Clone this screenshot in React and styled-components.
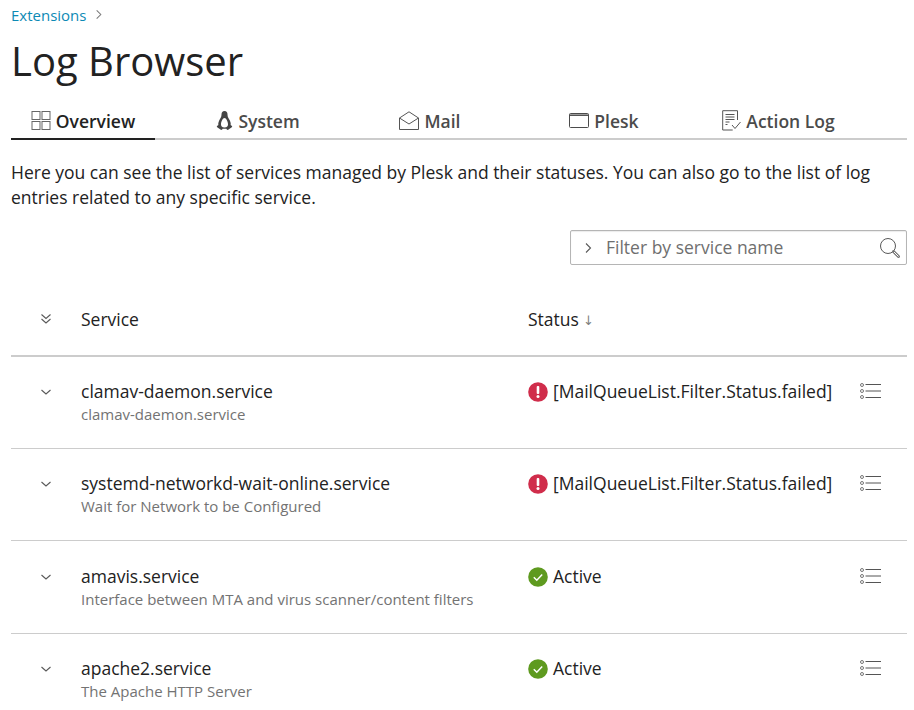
import React from "react";
import styled, { createGlobalStyle } from "styled-components";

const Global = createGlobalStyle`
  html, body { margin: 0; padding: 0; background: #fff; height: 100%; overflow: hidden; }
  body { font-family: "Open Sans", "Liberation Sans", sans-serif; color: #222; font-size: 16px; }
`;
const Page = styled.div`
  padding: 0 7px 0 11px;
  width: 914px;
  box-sizing: border-box;
`;
const Crumbs = styled.nav`
  display: flex;
  align-items: center;
  gap: 7px;
  height: 32px;
  font-size: 15px;
  color: #0d8ab5;
  padding-bottom: 3px;
  box-sizing: border-box;
`;
const Title = styled.h1`
  margin: 0;
  font-size: 40px;
  font-weight: 400;
  line-height: 58px;
  color: #222;
`;
const Tabs = styled.div`
  display: flex;
  height: 50px;
  border-bottom: 2px solid #ccc;
  box-sizing: border-box;
`;
const Tab = styled.div`
  width: ${(p) => p.$w}px;
  display: flex;
  align-items: center;
  justify-content: center;
  gap: 5px;
  font-size: 17.5px;
  font-weight: 600;
  color: ${(p) => (p.$active ? "#222" : "#4b4b4b")};
  height: 50px;
  padding-top: 13px;
  box-sizing: border-box;
  border-bottom: 2px solid ${(p) => (p.$active ? "#222" : "transparent")};
`;
const Intro = styled.p`
  margin: 20px 0 0;
  font-size: 17.5px;
  line-height: 25px;
  color: #222;
`;
const FilterRow = styled.div`
  display: flex;
  justify-content: flex-end;
  margin-top: 20px;
`;
const Filter = styled.div`
  width: 337px;
  height: 35px;
  box-sizing: border-box;
  border: 1px solid #b5b5b5;
  border-radius: 2px;
  display: flex;
  align-items: center;
  padding: 0 5px 0 11px;
  box-shadow: inset 0 1px 1px rgba(0, 0, 0, 0.08);
`;
const Placeholder = styled.span`
  flex: 1;
  margin-left: 12px;
  font-size: 17.5px;
  line-height: 30px;
  padding-bottom: 2px;
  color: #6f6f6f;
`;
const Grid = styled.div`
  display: grid;
  grid-template-columns: 70px 447px 1fr 59px;
  margin-top: 31px;
`;
const HeaderCell = styled.div`
  height: 61px;
  border-bottom: 2px solid #ccc;
  box-sizing: border-box;
  display: flex;
  align-items: flex-start;
  justify-content: ${(p) => (p.$center ? "center" : "flex-start")};
  padding-top: ${(p) => (p.$center ? 16 : 11)}px;
  font-size: 17.5px;
  line-height: 24px;
  color: #222;
  gap: 4px;
`;
const Cell = styled.div`
  height: 92.2px;
  border-bottom: 1px solid #ccc;
  box-sizing: border-box;
  padding-top: ${(p) => p.$top ?? 22.2}px;
  display: flex;
  align-items: flex-start;
  justify-content: ${(p) => (p.$center ? "center" : p.$end ? "flex-end" : "flex-start")};
  padding-right: ${(p) => (p.$end ? 26 : 0)}px;
`;
const ServiceName = styled.div`
  font-size: 17.5px;
  line-height: 24px;
  color: #222;
`;
const ServiceDesc = styled.div`
  font-size: 15px;
  line-height: 22px;
  color: #737373;
`;
const StatusWrap = styled.div`
  display: flex;
  align-items: center;
  gap: 5px;
  font-size: 17.5px;
  line-height: 24px;
  color: #222;
`;
const StatusBadge = styled.span`
  display: block;
  margin: 2px 0.5px 0 -0.5px;
  flex: none;
`;
const Arrow = styled.span`
  font-size: 13px;
  color: #808080;
  font-family: "DejaVu Sans", sans-serif;
  padding-top: 2px;
`;

const Chevron = ({ dir = "down", w = 12, c = "#595959" }) => (
  <svg width={w} height={w} viewBox="0 0 12 12" fill="none" stroke={c} strokeWidth="1.1" style={{ display: "block", flex: "none" }}>
    {dir === "down" ? <path d="M1.5 4l4.5 4 4.5-4" /> : <path d="M4 1.5l4.5 4.5L4 10.5" />}
  </svg>
);
const Double = () => (
  <svg width="12" height="14" viewBox="0 0 12 14" fill="none" stroke="#595959" strokeWidth="1.1" style={{ display: "block" }}>
    <path d="M1.5 2.5l4.5 4 4.5-4M1.5 7l4.5 4 4.5-4" />
  </svg>
);
const GridIcon = () => (
  <svg width="20" height="20" viewBox="0 0 20 20" fill="none" stroke="#666" style={{ display: "block", flex: "none" }}>
    <rect x="1" y="0.5" width="8" height="8" />
    <rect x="11" y="0.5" width="8" height="8" />
    <rect x="1" y="10.5" width="8" height="8" />
    <rect x="11" y="10.5" width="8" height="8" />
  </svg>
);
const Tux = () => (
  <svg width="17" height="21" viewBox="0 0 17 20" style={{ display: "block", flex: "none" }}>
    <path fill="#444" fillRule="evenodd" d="M8.5 0.5c2 0 3 1.5 3 3.5 0 2.5 1 3.5 2.2 5.8 1 2 1.3 3.6.9 4.6.9.5 1.6 1 1.6 1.8 0 .8-2.6 1.6-3.6 2.8-.8.8-2 .3-2.2-.8H6.6c-.2 1.1-1.4 1.6-2.2.8-1-1.2-3.6-2-3.6-2.8 0-.8.7-1.3 1.6-1.8-.4-1 0-2.6.9-4.6C4.500 7.500 5.500 6.500 5.500 4c0-2 1-3.500 3-3.500zM8.500 7.500C6.800 7.500 5 11 5 14c0 1.500.8 3 3.500 3s3.500-1.500 3.500-3c0-3-1.800-6.500-3.500-6.500z" />
  </svg>
);
const MailIcon = () => (
  <svg width="20" height="20" viewBox="0 0 20 20" fill="none" stroke="#555" style={{ display: "block", flex: "none" }}>
    <path d="M0.500 7L10 0.800 19.500 7v11.500H0.500zM0.500 7l9.500 6 9.500-6" />
  </svg>
);
const WindowIcon = () => (
  <svg width="20" height="16" viewBox="0 0 20 16" fill="none" stroke="#4b4b4b" style={{ display: "block", flex: "none" }}>
    <rect x="0.500" y="0.500" width="19" height="14" rx="1" />
    <path d="M0.500 2.200h19" strokeWidth="1.500" />
  </svg>
);
const LogIcon = () => (
  <svg width="19" height="21" viewBox="0 0 19 21" fill="none" stroke="#555" style={{ display: "block", flex: "none" }}>
    <path d="M15.500 10V0.700H0.700v19.300h10" />
    <path d="M3.500 4.500h9M3.500 7h9M3.500 9.500h9M3.500 12h4M3.500 14.500h2" />
    <path d="M10 15l3 3.500 5.500-6.500" />
  </svg>
);
const SearchIcon = () => (
  <svg width="22" height="22" viewBox="0 0 22 22" fill="none" style={{ display: "block", flex: "none" }}>
    <circle cx="9" cy="9" r="7.500" stroke="#595959" />
    <path d="M14.500 14.500l5 5" stroke="#777" strokeWidth="3" strokeLinecap="round" />
    <path d="M15 15l4.500 4.500" stroke="#fff" strokeWidth="1" />
  </svg>
);
const ListIcon = () => (
  <svg width="21" height="16" viewBox="0 0 21 16" fill="none" style={{ display: "block" }}>
    <circle cx="2" cy="2" r="1.500" stroke="#777" />
    <circle cx="2" cy="8" r="1.500" stroke="#777" />
    <circle cx="2" cy="14" r="1.500" stroke="#777" />
    <path d="M5.500 1.500h15.500M5.500 8h15.500M5.500 14.500h15.500" stroke="#555" />
  </svg>
);
const FailIcon = () => (
  <svg width="20" height="20" viewBox="0 0 20 20" style={{ display: "block" }}>
    <circle cx="10" cy="10" r="9.800" fill="#d02d4b" />
    <rect x="8.700" y="4" width="2.600" height="8" rx="1" fill="#fff" />
    <circle cx="10" cy="14.500" r="1.500" fill="#fff" />
  </svg>
);
const OkIcon = () => (
  <svg width="20" height="20" viewBox="0 0 20 20" style={{ display: "block" }}>
    <circle cx="10" cy="10" r="9.800" fill="#5e9a1f" />
    <path d="M5.800 10.200l3 3 5.400-5.600" fill="none" stroke="#fff" strokeWidth="1.500" />
  </svg>
);

const FAILED = "[MailQueueList.Filter.Status.failed]";
const rows = [
  { name: "clamav-daemon.service", desc: "clamav-daemon.service", failed: true },
  { name: "systemd-networkd-wait-online.service", desc: "Wait for Network to be Configured", failed: true },
  { name: "amavis.service", desc: "Interface between MTA and virus scanner/content filters" },
  { name: "apache2.service", desc: "The Apache HTTP Server" },
];

export default function App() {
  return (
    <Page>
      <Global />
      <Crumbs>
        Extensions <Chevron dir="right" w={11} c="#777" />
      </Crumbs>
      <Title>Log Browser</Title>
      <Tabs>
        <Tab $w={144} $active><GridIcon />Overview</Tab>
        <Tab $w={206}><Tux />System</Tab>
        <Tab $w={138}><MailIcon />Mail</Tab>
        <Tab $w={210}><WindowIcon />Plesk</Tab>
        <Tab $w={139}><LogIcon />Action Log</Tab>
      </Tabs>
      <Intro>
        Here you can see the list of services managed by Plesk and their statuses. You can also go to the list of log entries related to any specific service.
      </Intro>
      <FilterRow>
        <Filter>
          <Chevron dir="right" w={12} />
          <Placeholder>Filter by service name</Placeholder>
          <SearchIcon />
        </Filter>
      </FilterRow>
      <Grid>
        <HeaderCell $center><Double /></HeaderCell>
        <HeaderCell>Service</HeaderCell>
        <HeaderCell>Status <Arrow>↓</Arrow></HeaderCell>
        <HeaderCell />
        {rows.map((r) => (
          <React.Fragment key={r.name}>
            <Cell $center $top={29.2}><Chevron /></Cell>
            <Cell>
              <div>
                <ServiceName>{r.name}</ServiceName>
                <ServiceDesc>{r.desc}</ServiceDesc>
              </div>
            </Cell>
            <Cell>
              <StatusWrap>
                <StatusBadge>{r.failed ? <FailIcon /> : <OkIcon />}</StatusBadge>
                {r.failed ? FAILED : "Active"}
              </StatusWrap>
            </Cell>
            <Cell $end $top={26.2}><ListIcon /></Cell>
          </React.Fragment>
        ))}
      </Grid>
    </Page>
  );
}
